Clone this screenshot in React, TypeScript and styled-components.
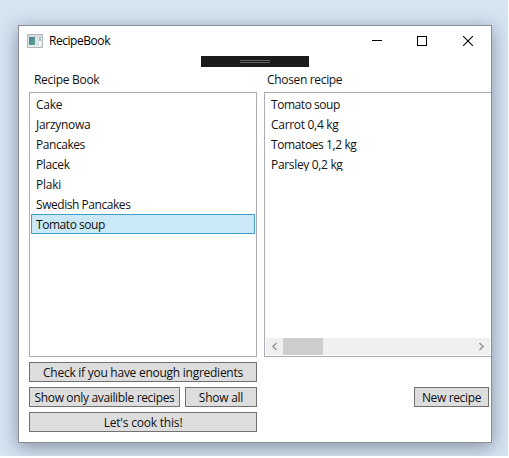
import React from 'react';
import styled, { createGlobalStyle } from 'styled-components';

const GlobalStyle = createGlobalStyle`
  * { box-sizing: border-box; }
  html, body { margin: 0; height: 100%; background: #fff; overflow: hidden; }
  body { font: 12px/16px 'Open Sans', 'Noto Sans', sans-serif; color: #111; }
`;

const Desktop = styled.div`
  width: 508px;
  height: 456px;
  padding: 25px 16px 13px 18px;
  background: #d6e3f1;
  overflow: hidden;
`;

const AppWindow = styled.main`
  width: 474px;
  height: 418px;
  border: 1px solid #8b8f94;
  background: #fff;
  box-shadow: 0 4px 17px rgba(30, 45, 65, 0.45);
  display: flex;
  flex-direction: column;
`;

const TitleBar = styled.header`
  height: 30px;
  flex: none;
  display: flex;
  align-items: center;
  padding-left: 8px;
`;

const Title = styled.h1`
  margin: 0 auto 0 6px;
  font-size: 12px;
  font-weight: 400;
  color: #000;
`;

const CaptionButton = styled.button<{ $width?: number }>`
  width: ${(p) => p.$width ?? 46}px;
  height: 30px;
  padding: 0;
  border: 0;
  background: none;
  display: grid;
  place-items: center;
`;

const DebugBar = styled.div`
  flex: none;
  width: 108px;
  height: 11px;
  margin-left: 182px;
  background: #1b1b1c;
  display: grid;
  place-items: center;
`;

const Grip = styled.span`
  width: 30px;
  height: 3px;
  border: solid #626262;
  border-width: 1px 0;
`;

const Columns = styled.div`
  flex: 1;
  display: grid;
  grid-template-columns: 228px 227px;
  column-gap: 7px;
  padding-left: 10px;
`;

const Column = styled.section`
  display: flex;
  flex-direction: column;
`;

const Heading = styled.h2<{ $indent: number }>`
  height: 25px;
  margin: 0;
  padding: 5px 0 0 ${(p) => p.$indent}px;
  font-size: 12px;
  font-weight: 400;
`;

const ListBox = styled.div<{ $cut?: boolean }>`
  height: 265px;
  border: 1px solid #abadb3;
  border-right-width: ${(p) => (p.$cut ? 0 : 1)}px;
  padding: 1px;
  padding-right: ${(p) => (p.$cut ? 0 : 1)}px;
  display: flex;
  flex-direction: column;
  cursor: default;
`;

const Item = styled.div<{ $selected?: boolean }>`
  flex: none;
  height: 20px;
  padding: 2px 4px 0;
  border: 1px solid ${(p) => (p.$selected ? '#3e9fcb' : 'transparent')};
  background: ${(p) => (p.$selected ? '#cbe8f6' : 'transparent')};
`;

const Line = styled.div<{ $clipped?: boolean }>`
  flex: none;
  height: ${(p) => (p.$clipped ? 17 : 20)}px;
  padding: 3px 5px 0;
  overflow: hidden;
`;

const ScrollBar = styled.div`
  height: 17px;
  margin: auto 1px 0 0;
  background: #f0f0f0;
  display: flex;
  align-items: center;
  justify-content: space-between;
`;

const Thumb = styled.span`
  width: 40px;
  height: 17px;
  margin-right: auto;
  background: #cdcdcd;
`;

const Arrow = styled.svg`
  width: 17px;
  height: 17px;
  fill: none;
  stroke: #999;
  stroke-width: 1.6;
`;

const Actions = styled.div`
  display: flex;
  flex-direction: column;
  gap: 5px;
  padding-top: 5px;
`;

const ActionRow = styled.div`
  display: flex;
  gap: 5px;
`;

const Button = styled.button<{ $width: number; $spacing: number }>`
  width: ${(p) => p.$width}px;
  height: 20px;
  padding: 2px 0 0;
  border: 1px solid #707070;
  background: #ddd;
  color: #111;
  font: inherit;
  letter-spacing: ${(p) => p.$spacing}px;
  white-space: nowrap;
`;

const NewRecipe = styled.div`
  display: flex;
  justify-content: flex-end;
  padding: 30px 2px 0 0;
`;

const Text = styled.span<{ $spacing: number }>`
  display: block;
  letter-spacing: ${(p) => p.$spacing}px;
  white-space: nowrap;
`;

type Entry = { name: string; spacing: number };

const recipes: Entry[] = [
  { name: 'Cake', spacing: -0.25 },
  { name: 'Jarzynowa', spacing: -0.3 },
  { name: 'Pancakes', spacing: -0.45 },
  { name: 'Placek', spacing: -0.35 },
  { name: 'Plaki', spacing: -0.25 },
  { name: 'Swedish Pancakes', spacing: -0.45 },
  { name: 'Tomato soup', spacing: -0.45 },
];

const chosen: Entry[] = [
  { name: 'Tomato soup', spacing: -0.45 },
  { name: 'Carrot 0,4 kg', spacing: -0.3 },
  { name: 'Tomatoes 1,2 kg', spacing: -0.4 },
  { name: 'Parsley 0,2 kg', spacing: -0.33 },
];

const AppIcon = () => (
  <svg width="16" height="14" viewBox="0 0 16 14">
    <defs>
      <linearGradient id="pane" x1="0" y1="0" x2="1" y2="1">
        <stop offset="0" stopColor="#4878a0" />
        <stop offset="1" stopColor="#5fab86" />
      </linearGradient>
    </defs>
    <rect x="0.5" y="0.5" width="15" height="13" fill="#e9ecee" stroke="#b4b8bc" />
    <rect x="1" y="1" width="14" height="2" fill="#d5d9dc" />
    <rect x="2" y="3" width="6" height="8" fill="url(#pane)" />
    <rect x="8" y="3" width="4" height="8" fill="#dce5ea" />
    <rect x="12" y="3" width="2" height="4" fill="#a9bfc0" />
    <rect x="12" y="7" width="2" height="4" fill="#f8f8f8" />
  </svg>
);

export default function App() {
  return (
    <Desktop>
      <GlobalStyle />
      <AppWindow>
        <TitleBar>
          <AppIcon />
          <Title><Text $spacing={-0.45}>RecipeBook</Text></Title>
          <CaptionButton aria-label="Minimize" $width={44}>
            <svg width="10" height="10" shapeRendering="crispEdges"><path d="M0 4.5H10" stroke="#000" /></svg>
          </CaptionButton>
          <CaptionButton aria-label="Maximize">
            <svg width="10" height="10" shapeRendering="crispEdges"><path d="M.5.5h9v9h-9z" stroke="#000" fill="none" /></svg>
          </CaptionButton>
          <CaptionButton aria-label="Close">
            <svg width="10" height="10"><path d="M0 0L10 10M10 0L0 10" stroke="#000" strokeWidth="1.1" /></svg>
          </CaptionButton>
        </TitleBar>
        <DebugBar><Grip /></DebugBar>
        <Columns>
          <Column>
            <Heading $indent={5}><Text $spacing={-0.3}>Recipe Book</Text></Heading>
            <ListBox>
              {recipes.map((r) => (
                <Item key={r.name} $selected={r.name === 'Tomato soup'}>
                  <Text $spacing={r.spacing}>{r.name}</Text>
                </Item>
              ))}
            </ListBox>
            <Actions>
              <Button $width={228} $spacing={-0.26}>Check if you have enough ingredients</Button>
              <ActionRow>
                <Button $width={151} $spacing={-0.34}>Show only availible recipes</Button>
                <Button $width={72} $spacing={-0.25}>Show all</Button>
              </ActionRow>
              <Button $width={228} $spacing={-0.2}>Let's cook this!</Button>
            </Actions>
          </Column>
          <Column>
            <Heading $indent={3}><Text $spacing={-0.33}>Chosen recipe</Text></Heading>
            <ListBox $cut>
              {chosen.map((r, i) => (
                <Line key={r.name} $clipped={i === 3}>
                  <Text $spacing={r.spacing}>{r.name}</Text>
                </Line>
              ))}
              <ScrollBar>
                <Arrow viewBox="0 0 17 17"><path d="M10.5 5L7 8.5L10.5 12" /></Arrow>
                <Thumb />
                <Arrow viewBox="0 0 17 17"><path d="M6.5 5L10 8.5L6.5 12" /></Arrow>
              </ScrollBar>
            </ListBox>
            <NewRecipe><Button $width={75} $spacing={-0.35}>New recipe</Button></NewRecipe>
          </Column>
        </Columns>
      </AppWindow>
    </Desktop>
  );
}
